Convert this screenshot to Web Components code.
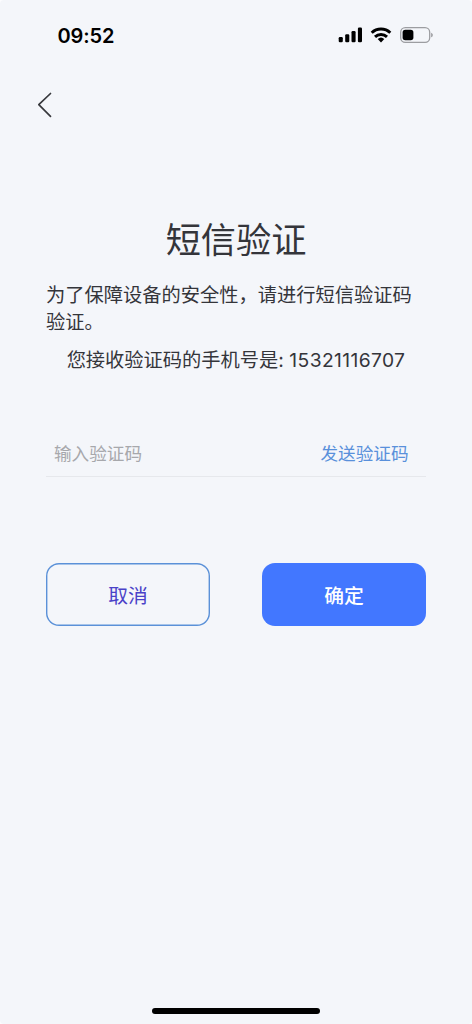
<!DOCTYPE html>
<html lang="zh-CN">
<head>
<meta charset="utf-8">
<title>短信验证</title>
<style>
html,body{margin:0;height:100%;background:#fcfdfe}
body{font-family:Inter,"Noto Sans CJK SC",sans-serif;color:#34353a}
</style>
</head>
<body>
<phone-screen>
  <status-bar slot="status" time="09:52"></status-bar>
  <nav-back slot="nav"></nav-back>
  <sms-verify phone="15321116707">
    <span slot="title">短信验证</span>
    <span slot="hint">为了保障设备的安全性，请进行短信验证码验证。</span>
    <code-field>
      <span slot="placeholder">输入验证码</span>
      <span slot="action">发送验证码</span>
    </code-field>
    <action-button slot="actions">取消</action-button>
    <action-button slot="actions" primary>确定</action-button>
  </sms-verify>
</phone-screen>
<script>
const define = (name, html, setup) => {
  const t = document.createElement('template');
  t.innerHTML = html;
  customElements.define(name, class extends HTMLElement {
    constructor() {
      super();
      this.attachShadow({mode: 'open'}).append(t.content.cloneNode(true));
    }
    connectedCallback() { if (setup) setup(this, this.shadowRoot); }
  });
};

define('phone-screen', `
<style>
:host{display:flex;flex-direction:column;box-sizing:border-box;width:472px;height:1024px;background:#f4f6fa;border-radius:4px;overflow:hidden}
main{flex:1}
footer{display:flex;justify-content:center;height:16px}
i{display:block;width:168px;height:6px;border-radius:3px;background:#000}
</style>
<slot name="status"></slot><slot name="nav"></slot><main><slot></slot></main><footer><i></i></footer>`);

define('status-bar', `
<style>
:host{display:flex;justify-content:space-between;align-items:center;box-sizing:border-box;height:70px;padding:0 38px 0 57.5px;color:#000}
b{font:600 20px/24px Inter,sans-serif;padding-top:2px;letter-spacing:-.1px}
svg{display:block}
</style>
<b></b>
<svg width="96" height="20" viewBox="338 25 96 20" fill="#000">
  <rect x="338.7" y="37" width="4.1" height="5.3" rx="1.2"/>
  <rect x="345.2" y="34.2" width="4.1" height="8.1" rx="1.2"/>
  <rect x="351.5" y="31" width="4.1" height="11.3" rx="1.2"/>
  <rect x="357.9" y="27.6" width="4.1" height="14.7" rx="1.2"/>
  <g fill="none" stroke="#000" stroke-width="2.9">
    <path d="M371.7 32.8a13.3 13.3 0 0 1 18.6 0"/>
    <path d="M375 36.9a8.6 8.6 0 0 1 12 0"/>
  </g>
  <path d="M377.7 39.1a4.8 4.8 0 0 1 6.6 0L381 42.5z"/>
  <rect x="400.7" y="27.7" width="29" height="14.6" rx="4.6" fill="none" stroke="#9c9da1" stroke-width="1.3"/>
  <rect x="402.6" y="29.7" width="10.8" height="10.6" rx="2.7"/>
  <path d="M431.1 32.7c2.3.8 2.3 3.8 0 4.6z" fill="#9c9da1"/>
</svg>`, (el, r) => { r.querySelector('b').textContent = el.getAttribute('time'); });

define('nav-back', `
<style>:host{display:flex;align-items:center;height:70px;padding-left:36px}svg{display:block}</style>
<svg width="18" height="28" viewBox="0 0 18 28" fill="none" stroke="#37383c" stroke-width="1.7" stroke-linecap="round" stroke-linejoin="round"><path d="M14.5 2.5 2.8 13.6l11.7 11.7"/></svg>`);

define('sms-verify', `
<style>
:host{display:block;padding:74px 46px 0}
h1{margin:0;font-weight:400;font-size:35.2px;line-height:52px;text-align:center}
p{margin:0;font-size:19.25px;line-height:26.5px}
.hint{margin-top:16px;width:380px}
.phone{margin-top:12px;text-align:center;white-space:nowrap}
.phone span{letter-spacing:.38px}
.buttons{display:flex;justify-content:space-between;margin-top:86px}
</style>
<h1><slot name="title"></slot></h1>
<p class="hint"><slot name="hint"></slot></p>
<p class="phone">您接收验证码的手机号是: <span></span></p>
<slot></slot>
<div class="buttons"><slot name="actions"></slot></div>`,
(el, r) => { r.querySelector('.phone span').textContent = el.getAttribute('phone'); });

define('code-field', `
<style>
:host{display:flex;justify-content:space-between;align-items:center;box-sizing:border-box;height:48px;margin-top:55px;padding:4px 17.5px 0 8px;border-bottom:1px solid #e6e8ec;font-size:17.6px;line-height:26px}
.placeholder{color:#a7a8ac}
.action{color:#5990db}
</style>
<span class="placeholder"><slot name="placeholder"></slot></span>
<span class="action"><slot name="action"></slot></span>`);

define('action-button', `
<style>
:host{display:flex;align-items:center;justify-content:center;box-sizing:border-box;width:164px;height:63px;padding-top:3px;box-shadow:inset 0 0 0 1.4px #5b91d8;border-radius:13px;color:#4a42c8;font-size:19.8px;line-height:30px}
:host([primary]){background:#4277ff;box-shadow:none;color:#fff;font-weight:500}
</style>
<slot></slot>`);
</script>
</body>
</html>
